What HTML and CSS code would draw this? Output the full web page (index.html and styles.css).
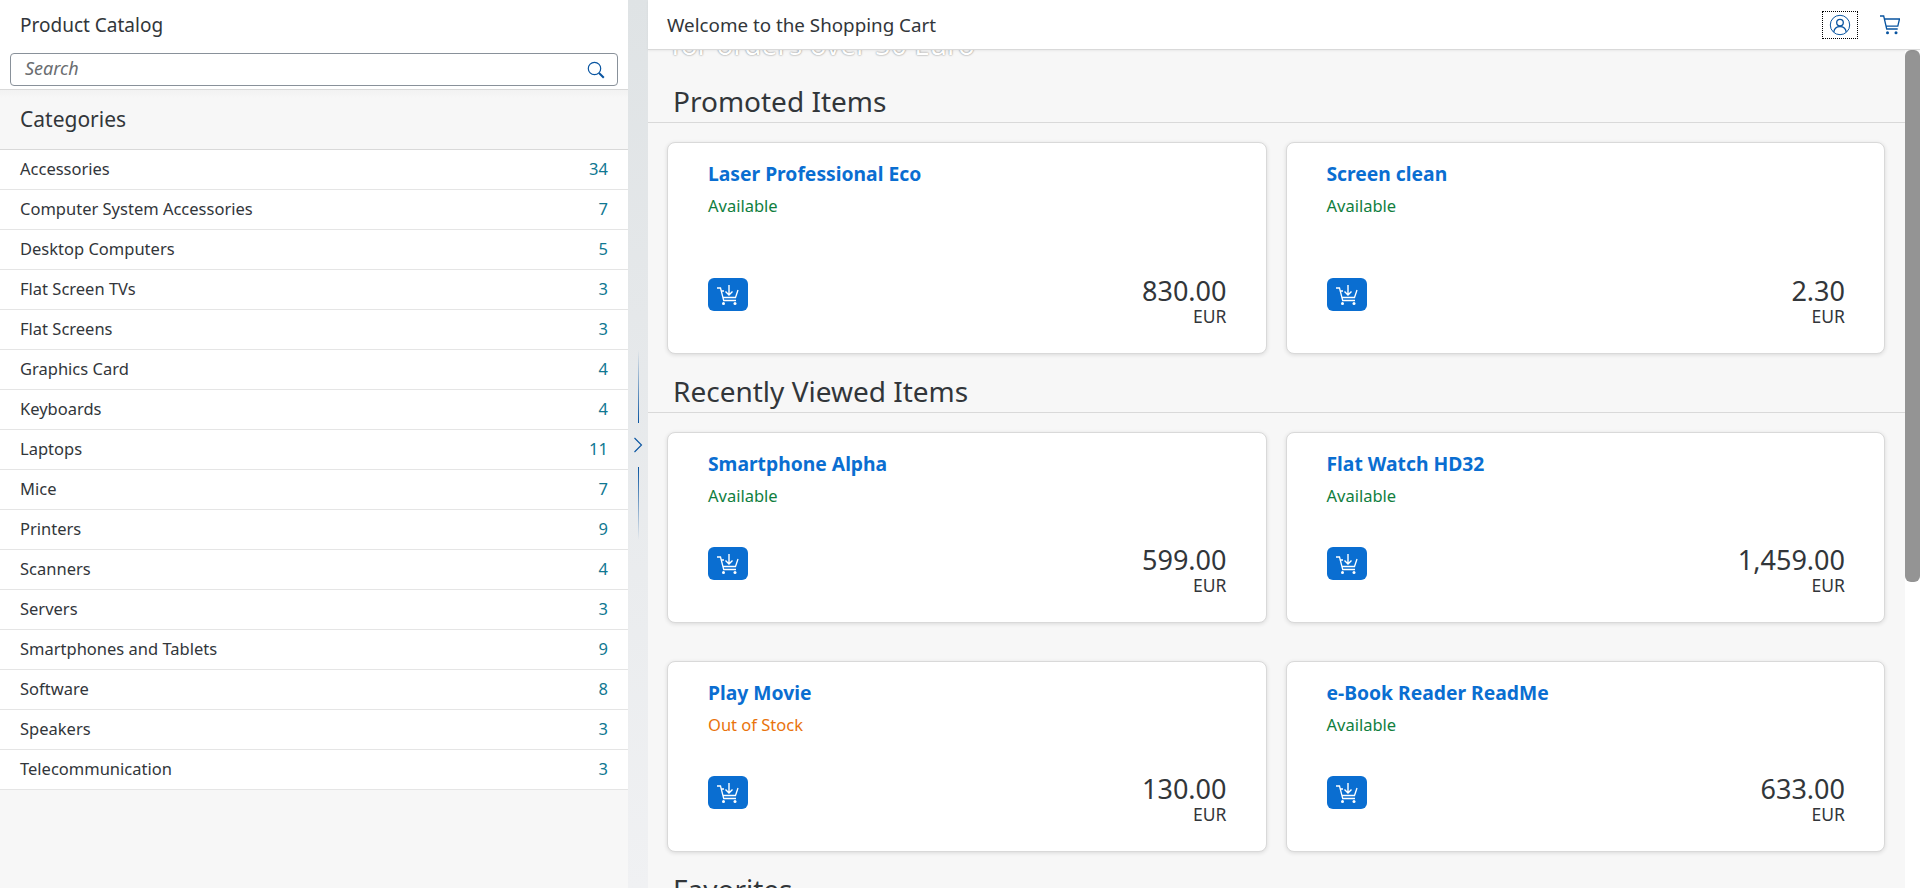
FILE: index.html
```html
<!DOCTYPE html>
<html lang="en">
<head>
<meta charset="utf-8">
<title>Shopping Cart</title>
<link rel="stylesheet" href="styles.css">
</head>
<body>
<svg class="defs" width="0" height="0" aria-hidden="true">
  <symbol id="add-cart" viewBox="0 0 22 20">
    <path d="M0 3h3.500l3.200 12.500h12.300M4.400 6h2.600M21 5l-2.500 7.500H5.900" fill="none" stroke="currentColor" stroke-width="1.300"/>
    <path d="M12 0v10M8.500 6.500l3.500 3.500 3.500-3.500" fill="none" stroke="currentColor" stroke-width="1.400"/>
    <circle cx="6.500" cy="18.500" r="1.500" fill="currentColor"/>
    <circle cx="18" cy="18.500" r="1.500" fill="currentColor"/>
  </symbol>
</svg>
<div class="app">
  <aside class="master">
    <div class="master-title">Product Catalog</div>
    <div class="search-wrap">
      <div class="search">
        <span class="search-ph">Search</span>
        <svg class="search-icon" viewBox="0 0 18 18" width="18" height="18"><circle cx="7.500" cy="7.500" r="6.200" fill="none" stroke="currentColor" stroke-width="1.200"/><path d="M12 12l4.800 4.800" fill="none" stroke="currentColor" stroke-width="2"/></svg>
      </div>
    </div>
    <div class="cat-head">Categories</div>
    <ul class="cat-list">
      <li><span>Accessories</span><span class="count">34</span></li>
      <li><span>Computer System Accessories</span><span class="count">7</span></li>
      <li><span>Desktop Computers</span><span class="count">5</span></li>
      <li><span>Flat Screen TVs</span><span class="count">3</span></li>
      <li><span>Flat Screens</span><span class="count">3</span></li>
      <li><span>Graphics Card</span><span class="count">4</span></li>
      <li><span>Keyboards</span><span class="count">4</span></li>
      <li><span>Laptops</span><span class="count">11</span></li>
      <li><span>Mice</span><span class="count">7</span></li>
      <li><span>Printers</span><span class="count">9</span></li>
      <li><span>Scanners</span><span class="count">4</span></li>
      <li><span>Servers</span><span class="count">3</span></li>
      <li><span>Smartphones and Tablets</span><span class="count">9</span></li>
      <li><span>Software</span><span class="count">8</span></li>
      <li><span>Speakers</span><span class="count">3</span></li>
      <li><span>Telecommunication</span><span class="count">3</span></li>
    </ul>
  </aside>
  <div class="splitter">
    <span class="grip grip-top"></span>
    <svg class="chevron" viewBox="0 0 10 16" width="10" height="16"><path d="M1.500 1l7 7-7 7" fill="none" stroke="currentColor" stroke-width="1.100"/></svg>
    <span class="grip grip-bottom"></span>
  </div>
  <main class="detail">
    <header class="detail-head">
      <div class="detail-title">Welcome to the Shopping Cart</div>
      <div class="head-actions">
        <button class="icon-btn focused" aria-label="Avatar">
          <svg viewBox="0 0 22 22" width="22" height="22"><circle cx="11" cy="11" r="9.700" fill="none" stroke="currentColor" stroke-width="1"/><circle cx="11" cy="8.600" r="3.300" fill="none" stroke="currentColor" stroke-width="1.300"/><path d="M4.800 18c.5-3.500 3-5.300 6.200-5.300s5.700 1.800 6.200 5.300" fill="none" stroke="currentColor" stroke-width="1.300"/></svg>
        </button>
        <button class="icon-btn cart" aria-label="Cart">
          <svg viewBox="0 0 20 20" width="20" height="20"><path d="M0 1h3.700l3 13h11M4.500 4h15l-1.700 7.200H6" fill="none" stroke="currentColor" stroke-width="1.300"/><circle cx="7.500" cy="17.700" r="1.500" fill="currentColor"/><circle cx="16" cy="17.700" r="1.500" fill="currentColor"/></svg>
        </button>
      </div>
    </header>
    <div class="detail-body">
      <div class="scroller">
        <div class="banner"><span class="banner-text">for orders over 50 Euro</span></div>

        <section class="section">
          <h2 class="section-title">Promoted Items</h2>
          <div class="grid">
            <article class="card card-tall">
              <a class="card-name">Laser Professional Eco</a>
              <div class="status ok">Available</div>
              <div class="card-foot">
                <button class="add" aria-label="Add to cart"><svg width="22" height="20"><use href="#add-cart"/></svg></button>
                <div class="price"><div class="amount">830.00</div><div class="cur">EUR</div></div>
              </div>
            </article>
            <article class="card card-tall">
              <a class="card-name">Screen clean</a>
              <div class="status ok">Available</div>
              <div class="card-foot">
                <button class="add" aria-label="Add to cart"><svg width="22" height="20"><use href="#add-cart"/></svg></button>
                <div class="price"><div class="amount">2.30</div><div class="cur">EUR</div></div>
              </div>
            </article>
          </div>
        </section>

        <section class="section">
          <h2 class="section-title">Recently Viewed Items</h2>
          <div class="grid">
            <article class="card">
              <a class="card-name">Smartphone Alpha</a>
              <div class="status ok">Available</div>
              <div class="card-foot">
                <button class="add" aria-label="Add to cart"><svg width="22" height="20"><use href="#add-cart"/></svg></button>
                <div class="price"><div class="amount">599.00</div><div class="cur">EUR</div></div>
              </div>
            </article>
            <article class="card">
              <a class="card-name">Flat Watch HD32</a>
              <div class="status ok">Available</div>
              <div class="card-foot">
                <button class="add" aria-label="Add to cart"><svg width="22" height="20"><use href="#add-cart"/></svg></button>
                <div class="price"><div class="amount">1,459.00</div><div class="cur">EUR</div></div>
              </div>
            </article>
            <article class="card">
              <a class="card-name">Play Movie</a>
              <div class="status warn">Out of Stock</div>
              <div class="card-foot">
                <button class="add" aria-label="Add to cart"><svg width="22" height="20"><use href="#add-cart"/></svg></button>
                <div class="price"><div class="amount">130.00</div><div class="cur">EUR</div></div>
              </div>
            </article>
            <article class="card">
              <a class="card-name">e-Book Reader ReadMe</a>
              <div class="status ok">Available</div>
              <div class="card-foot">
                <button class="add" aria-label="Add to cart"><svg width="22" height="20"><use href="#add-cart"/></svg></button>
                <div class="price"><div class="amount">633.00</div><div class="cur">EUR</div></div>
              </div>
            </article>
          </div>
        </section>

        <section class="section">
          <h2 class="section-title">Favorites</h2>
        </section>
      </div>
      <div class="rail"><div class="thumb"></div></div>
    </div>
  </main>
</div>
</body>
</html>
```

FILE: styles.css
```css
* { box-sizing: border-box; }
html, body { margin: 0; height: 100%; overflow: hidden; }
body { font-family: "Noto Sans", "Open Sans", sans-serif; color: #32363a; font-size: 16.500px; background: #f7f7f7; }
.defs { position: absolute; }
.app { display: flex; height: 888px; }

/* master */
.master { width: 628px; flex: none; background: #f7f7f7; display: flex; flex-direction: column; }
.master-title { height: 50px; padding-left: 20px; line-height: 50px; font-size: 19px; background: #fff; }
.search-wrap { background: #fff; padding: 3px 10px; height: 40px; border-bottom: 1px solid #d9d9d9; }
.search { height: 33px; border: 1px solid #89919a; border-radius: 4px; display: flex; align-items: center; justify-content: space-between; padding: 0 12px 0 14px; }
.search-ph { font-style: italic; font-size: 18px; line-height: 28px; padding-bottom: 3px; color: #6a6d70; }
.search-icon { color: #0854a0; }
.cat-head { height: 60px; padding-left: 20px; line-height: 58px; font-size: 21px; background: linear-gradient(#f2f2f2, #f7f7f7 8px); border-bottom: 1px solid #d9d9d9; }
.cat-list { list-style: none; margin: 0; padding: 0; background: #fff; }
.cat-list li { height: 40px; display: flex; align-items: center; justify-content: space-between; padding: 0 20px 2px; border-bottom: 1px solid #e5e5e5; }
.count { color: #0f7892; }

/* splitter */
.splitter { width: 20px; flex: none; background: linear-gradient(#dfe3e5, #f0f1f3); display: flex; flex-direction: column; align-items: center; justify-content: center; color: #0854a0; padding-top: 2px; }
.grip { width: 1px; height: 73px; }
.grip-top { background: linear-gradient(transparent, #0854a0); }
.grip-bottom { background: linear-gradient(#0854a0, transparent); }
.chevron { margin: 14px 0; }

/* detail */
.detail { flex: 1; min-width: 0; display: flex; flex-direction: column; }
.detail-head { height: 50px; flex: none; background: #fff; border-bottom: 1px solid #d9d9d9; box-shadow: 0 1px 2px rgba(0,0,0,.06); display: flex; align-items: center; justify-content: space-between; padding: 0 20px 0 19px; position: relative; z-index: 1; }
.detail-title { font-size: 18.800px; }
.head-actions { display: flex; align-items: center; gap: 22px; }
.icon-btn { border: 0; background: none; padding: 0; color: #0854a0; display: flex; align-items: center; justify-content: center; }
.focused { width: 36px; height: 28px; outline: 1px dotted #000; outline-offset: -1px; }
.detail-body { flex: 1; min-height: 0; display: flex; }
.scroller { flex: 1; min-width: 0; overflow: hidden; }
.rail { width: 15px; flex: none; background: #fff; }
.thumb { height: 532px; background: #949494; border-radius: 6px; }

.banner { height: 31px; overflow: hidden; padding-left: 23px; }
.banner-text { display: block; margin-top: -25px; font-size: 28px; line-height: 38px; color: #fff; text-shadow: 0 0 2px rgba(0,0,0,.55); }

.section-title { margin: 0; height: 42px; padding-left: 25px; font-size: 28px; font-weight: 400; line-height: 40px; border-bottom: 1px solid #d9d9d9; }
.grid { display: grid; grid-template-columns: 1fr 1fr; gap: 38px 19px; padding: 19px 20px 17px 19px; }
.card { height: 191px; background: #fff; border: 1px solid #d9d9d9; border-radius: 8px; box-shadow: 0 1px 4px rgba(0,0,0,.12); padding: 18px 39px 0 40px; display: flex; flex-direction: column; }
.card-tall { height: 212px; }
.card-name { font-size: 19.300px; font-weight: 700; line-height: 25px; color: #0a6ed1; }
.status { margin-top: 8px; line-height: 24px; }
.ok { color: #107e3e; }
.warn { color: #e9730c; }
.card-foot { margin-top: auto; margin-bottom: 24px; display: flex; justify-content: space-between; align-items: flex-start; }
.add { width: 40px; height: 33px; border: 0; border-radius: 6px; background: #0a6ed1; color: #fff; padding: 0; display: flex; align-items: center; justify-content: center; }
.price { text-align: right; }
.amount { font-size: 27px; line-height: 26px; }
.cur { font-size: 17.500px; line-height: 25px; }
```
